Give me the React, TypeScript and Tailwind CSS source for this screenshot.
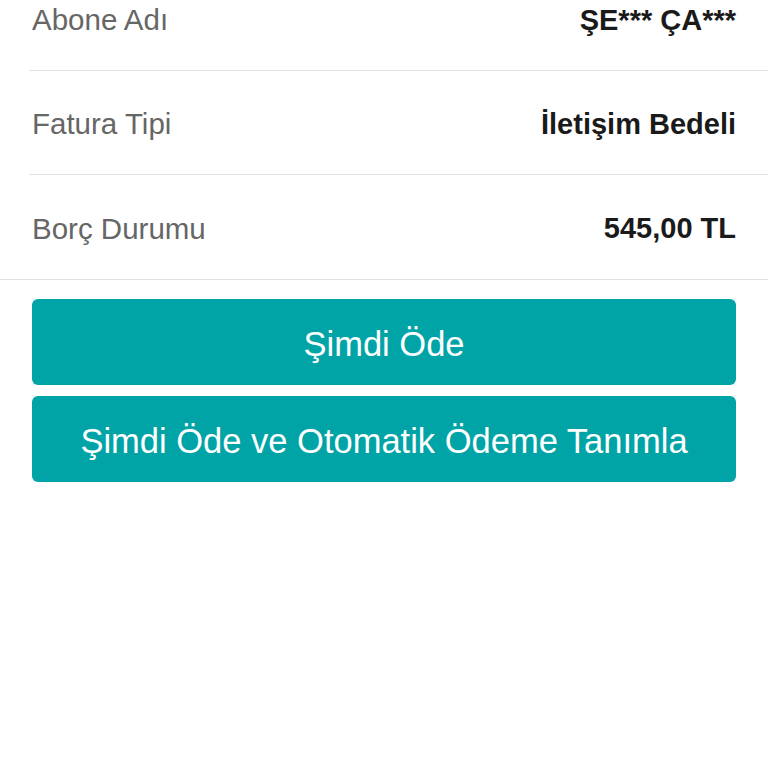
const rows = [
  { label: "Abone Adı", value: "ŞE*** ÇA***" },
  { label: "Fatura Tipi", value: "İletişim Bedeli" },
  { label: "Borç Durumu", value: "545,00 TL" },
];

export default function App() {
  return (
    <div className="min-h-[768px] bg-white font-['Liberation_Sans',Arial,sans-serif] overflow-hidden">
      <div className="-mt-[33px]">
        {rows.map((row, i) => {
          const last = i === rows.length - 1;
          return (
            <div key={row.label} className={last ? "border-b border-[#e3e3e3]" : "pl-[29px]"}>
              <div
                className={`flex h-[104px] items-center justify-between pt-[4px] pr-[32px] ${
                  last ? "pl-[32px]" : "pl-[3px] border-b border-[#e3e3e3]"
                }`}
              >
                <span className="text-[29.5px] text-[#666666]">{row.label}</span>
                <span className="text-[29px] font-semibold text-[#1a1a1a]">{row.value}</span>
              </div>
            </div>
          );
        })}
      </div>

      {/* butonlar */}
      <div className="mx-[32px] mt-[19px] flex flex-col gap-[11px]">
        <button className="h-[86px] rounded-[6px] bg-[#00a4a6] pt-[5px] text-[34.5px] text-white">
          Şimdi Öde
        </button>
        <button className="h-[86px] rounded-[6px] bg-[#00a4a6] pt-[5px] text-[34.5px] text-white">
          Şimdi Öde ve Otomatik Ödeme Tanımla
        </button>
      </div>
    </div>
  );
}
